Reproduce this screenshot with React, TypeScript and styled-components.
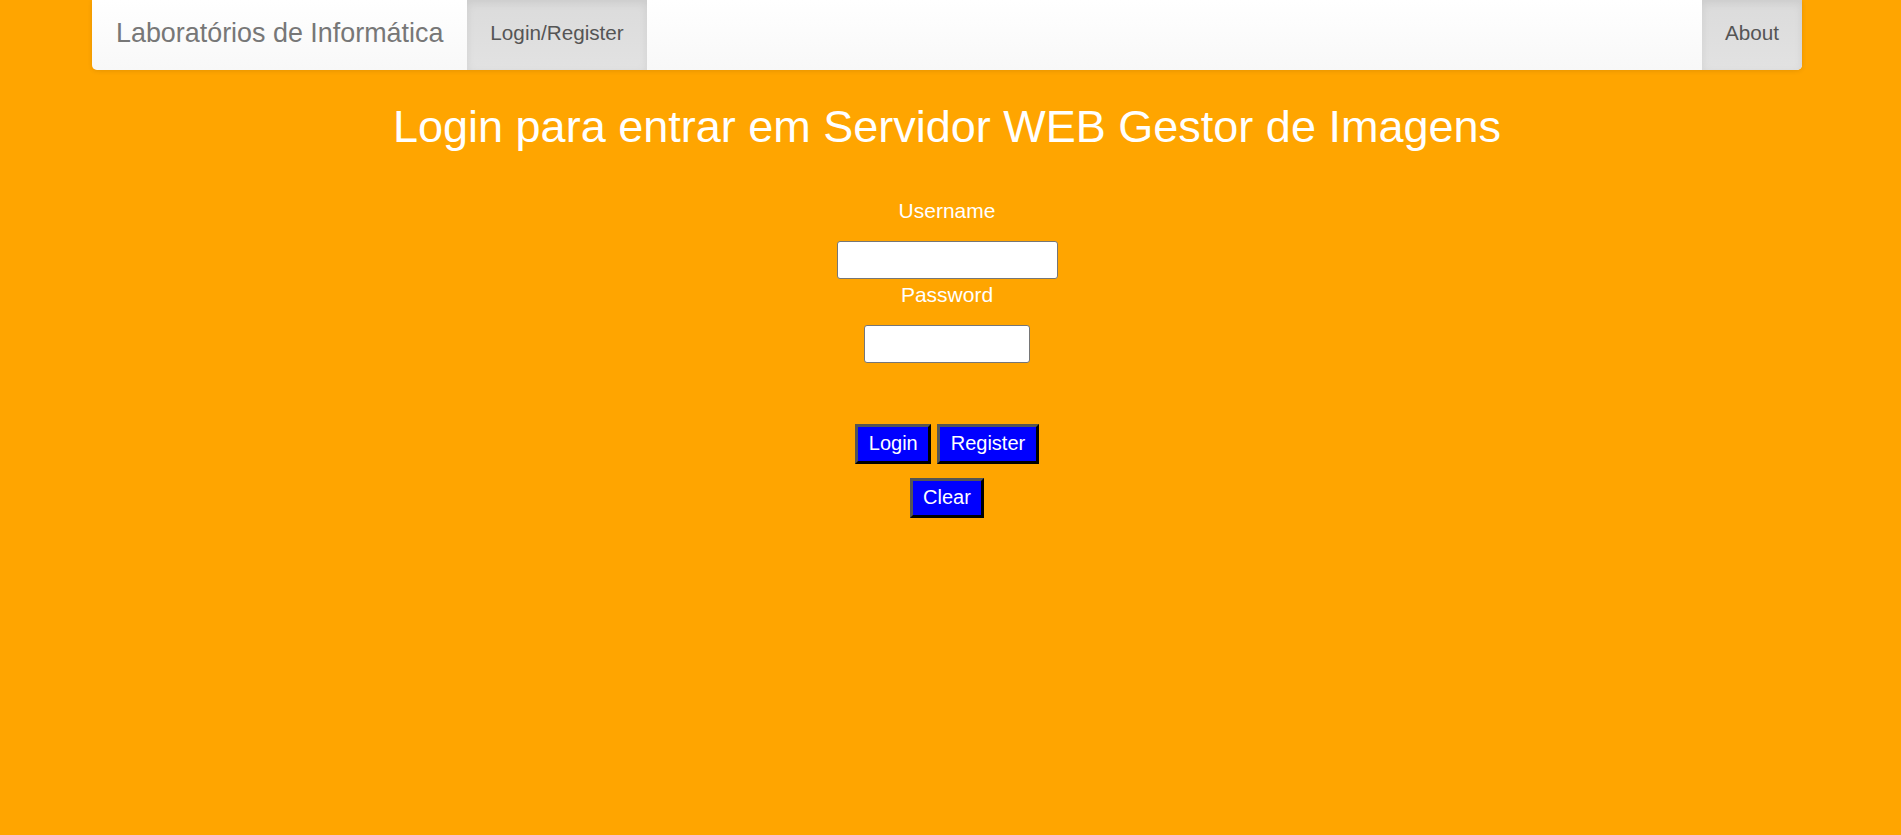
import * as React from 'react';
import styled, { createGlobalStyle } from 'styled-components';

const GlobalStyle = createGlobalStyle`
  html, body {
    margin: 0;
    padding: 0;
    background-color: #FFA500;
  }
  body {
    font-family: "Liberation Sans", Arial, sans-serif;
    min-height: 835px;
  }
`;

const Page = styled.div`
  padding: 0 99px 0 92px;
`;

const Navbar = styled.nav`
  display: flex;
  align-items: stretch;
  height: 70px;
  background-image: linear-gradient(to bottom, #FFF 0, #F8F8F8 100%);
  border-radius: 0 0 5px 5px;
  box-shadow: inset 0 1px 0 rgba(255,255,255,0.15), 0 1px 5px rgba(0,0,0,0.1);
  overflow: hidden;
`;

const Brand = styled.a`
  display: flex;
  align-items: center;
  padding: 0 24px 3px;
  font-size: 26.9px;
  color: #777;
  text-decoration: none;
`;

const NavLink = styled.a<{ $pad?: number }>`
  display: flex;
  align-items: center;
  padding: 0 ${p => p.$pad || 23}px 4px;
  font-size: 20.7px;
  color: #555;
  text-decoration: none;
  background-image: linear-gradient(to bottom, #DBDBDB 0, #E2E2E2 100%);
  box-shadow: inset 0 3px 9px rgba(0,0,0,0.075);
`;

const Spacer = styled.div`
  flex: 1;
`;

const Main = styled.main`
  display: flex;
  flex-direction: column;
  align-items: center;
  padding-top: 32px;
  color: #FFF;
`;

const Title = styled.h1`
  margin: 0 0 47px;
  font-size: 45px;
  line-height: 1.1;
  font-weight: 500;
`;

const Label = styled.label`
  display: block;
  font-size: 21px;
  line-height: 24px;
`;

const Input = styled.input<{ $width: number }>`
  box-sizing: border-box;
  width: ${p => p.$width}px;
  height: 38px;
  margin: 18px 0 4px;
  border: 1px solid #767676;
  border-radius: 3px;
  background: #FFF;
  font-size: 18px;
`;

const ButtonRow = styled.div<{ $top: number }>`
  display: flex;
  gap: 6px;
  margin-top: ${p => p.$top}px;
`;

const Button = styled.button`
  box-sizing: border-box;
  height: 40px;
  padding: 0 10.5px;
  background: #0000FF;
  color: #FFF;
  font-family: "Liberation Sans", Arial, sans-serif;
  font-size: 20px;
  border-style: solid;
  border-width: 3px;
  border-color: #555 #000 #000 #555;
  cursor: pointer;
`;

export default function App() {
  return (
    <>
      <GlobalStyle />
      <Page>
        <Navbar>
          <Brand href="#">Laboratórios de Informática</Brand>
          <NavLink href="#">Login/Register</NavLink>
          <Spacer />
          <NavLink href="#">About</NavLink>
        </Navbar>
        <Main>
          <Title>Login para entrar em Servidor WEB Gestor de Imagens</Title>
          <Label>Username</Label>
          <Input type="text" $width={221} />
          <Label>Password</Label>
          <Input type="password" $width={166} />
          <ButtonRow $top={57}>
            <Button>Login</Button>
            <Button>Register</Button>
          </ButtonRow>
          <ButtonRow $top={14}>
            <Button>Clear</Button>
          </ButtonRow>
        </Main>
      </Page>
    </>
  );
}
